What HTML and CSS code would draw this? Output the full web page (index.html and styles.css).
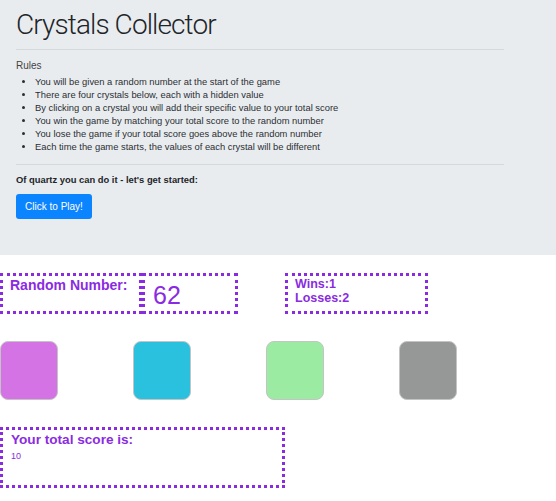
FILE: index.html
```html
<!DOCTYPE html>
<html>
<head>
<meta charset="utf-8">
<title>Crystals Collector</title>
<link rel="stylesheet" href="styles.css">
</head>
<body>
<div class="jumbotron">
  <h1 class="title">Crystals Collector</h1>
  <hr class="rule">
  <p class="rules-head">Rules</p>
  <ul class="rules-list">
    <li>You will be given a random number at the start of the game</li>
    <li>There are four crystals below, each with a hidden value</li>
    <li>By clicking on a crystal you will add their specific value to your total score</li>
    <li>You win the game by matching your total score to the random number</li>
    <li>You lose the game if your total score goes above the random number</li>
    <li>Each time the game starts, the values of each crystal will be different</li>
  </ul>
  <hr class="rule rule-2">
  <p class="start">Of quartz you can do it - let's get started:</p>
  <button class="play">Click to Play!</button>
</div>

<div class="stats">
  <div class="box box-label">Random Number:</div>
  <div class="box box-number">62</div>
  <div class="box box-record">
    <div>Wins:1</div>
    <div>Losses:2</div>
  </div>
</div>

<div class="crystals">
  <div class="crystal c-purple"></div>
  <div class="crystal c-cyan"></div>
  <div class="crystal c-green"></div>
  <div class="crystal c-gray"></div>
</div>

<div class="box score">
  <div class="score-title">Your total score is:</div>
  <div class="score-value">10</div>
</div>
</body>
</html>
```

FILE: styles.css
```css
html, body {
  margin: 0;
  padding: 0;
  background: #fff;
}
body {
  font-family: "Liberation Sans", Arial, sans-serif;
  color: #212529;
}
.jumbotron {
  background: #e9ecef;
  height: 255px;
  box-sizing: border-box;
  padding: 8px 52px 0 16px;
}
.title {
  margin: 0;
  font-family: Roboto, sans-serif;
  font-weight: 300;
  font-size: 28px;
  letter-spacing: -0.9px;
  line-height: 34px;
  color: #212529;
}
.rule {
  margin: 7px 0 0;
  border: 0;
  border-top: 1px solid rgba(0,0,0,0.08);
}
.rules-head {
  margin: 9px 0 0;
  font-size: 10px;
  line-height: 13px;
  color: #444;
}
.rules-list {
  margin: 3px 0 0;
  padding-left: 19px;
  font-size: 9.4px;
  line-height: 13px;
  color: #2b2f33;
}
.rule-2 {
  margin-top: 11px;
}
.start {
  margin: 8px 0 0;
  font-size: 9.4px;
  font-weight: bold;
  line-height: 13px;
}
.play {
  display: block;
  margin-top: 8px;
  width: 76px;
  height: 25px;
  padding: 0;
  border: 0;
  border-radius: 3px;
  background: #0a84ff;
  color: #fff;
  font-family: "Liberation Sans", Arial, sans-serif;
  font-size: 10px;
}
.box {
  border: 3px dotted #8a2be2;
  color: #8a2be2;
  box-sizing: border-box;
}
.stats {
  display: flex;
  margin-top: 18px;
  height: 41px;
}
.box-label {
  width: 142px;
  padding: 1px 0 0 7px;
  font-size: 14px;
  font-weight: bold;
  line-height: 16px;
}
.box-number {
  width: 96px;
  padding: 5px 0 0 8px;
  font-size: 25px;
  line-height: 28px;
}
.box-record {
  width: 143px;
  margin-left: 47px;
  padding: 1px 0 0 7px;
  font-size: 12.5px;
  font-weight: bold;
  line-height: 14px;
}
.crystals {
  display: flex;
  gap: 75px;
  margin-top: 27px;
}
.crystal {
  width: 58px;
  height: 59px;
  border-radius: 8px;
  border: 1px solid #c4c4c4;
  box-sizing: border-box;
}
.c-purple { background: #d473e3; }
.c-cyan { background: #2ac1df; }
.c-green { background: #9ceba2; }
.c-gray { background: #969897; }
.score {
  margin-top: 27px;
  width: 285px;
  height: 61px;
  padding: 1px 0 0 8px;
}
.score-title {
  font-size: 13.6px;
  font-weight: bold;
  line-height: 18px;
}
.score-value {
  margin-top: 2px;
  font-size: 9px;
  line-height: 10px;
}
```
